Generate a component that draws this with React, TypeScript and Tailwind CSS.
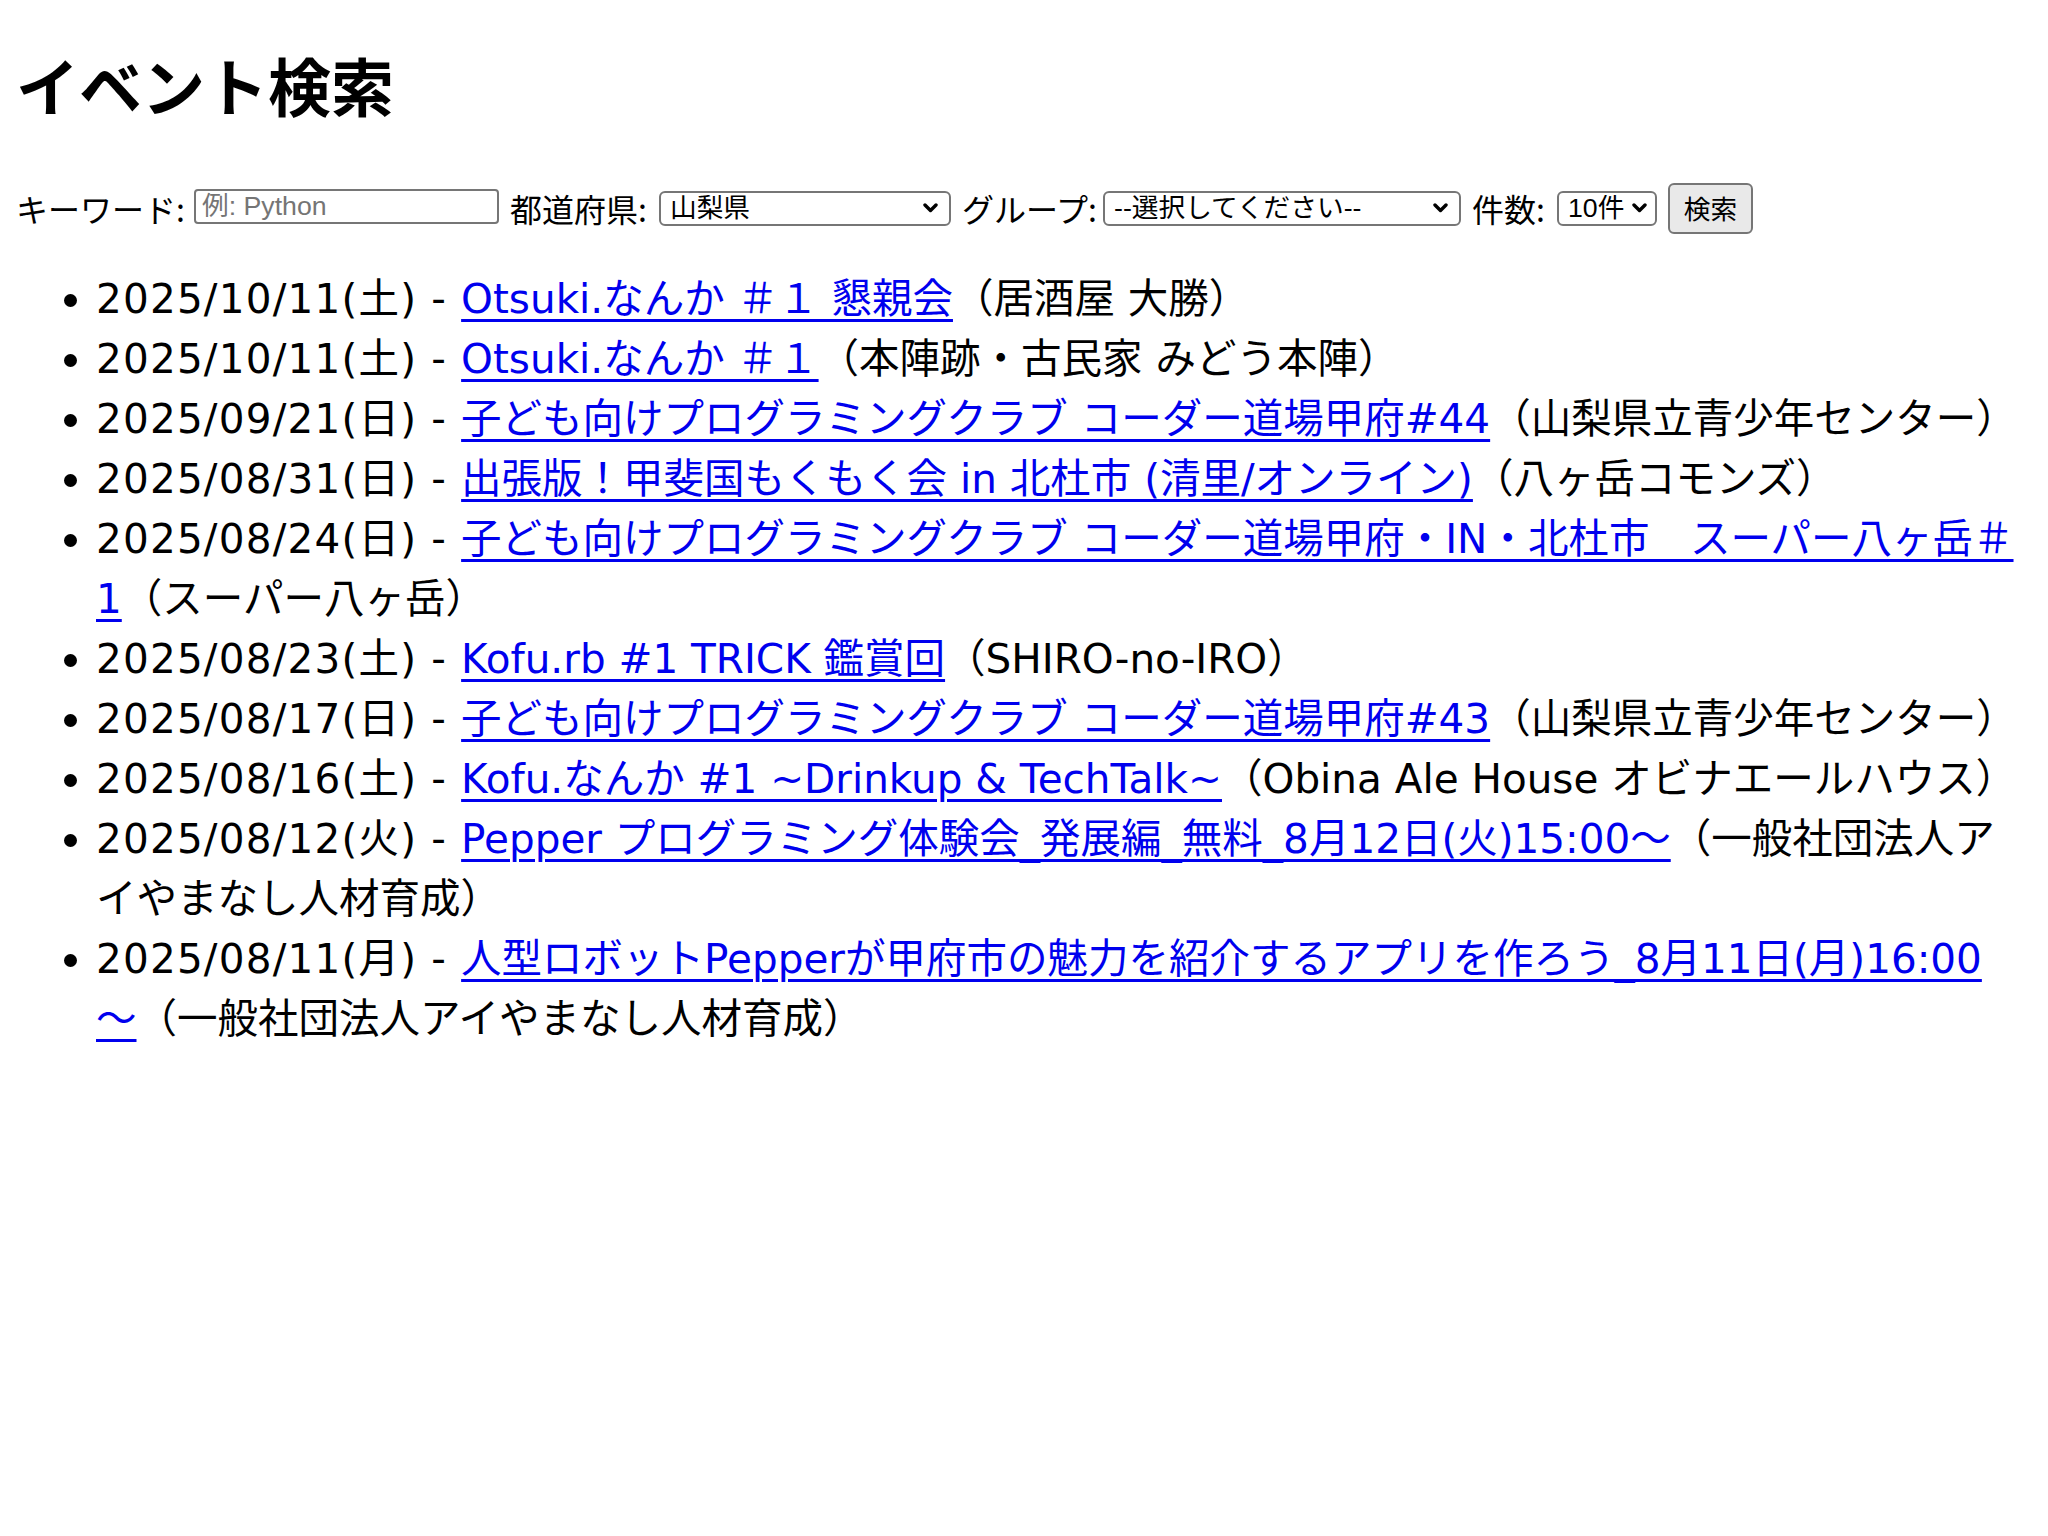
import React from "react";

type Ev = { date: string; title: string; place: string };

const events: Ev[] = [
  { date: "2025/10/11(土)", title: "Otsuki.なんか ＃１ 懇親会", place: "（居酒屋 大勝）" },
  { date: "2025/10/11(土)", title: "Otsuki.なんか ＃１", place: "（本陣跡・古民家 みどう本陣）" },
  { date: "2025/09/21(日)", title: "子ども向けプログラミングクラブ コーダー道場甲府#44", place: "（山梨県立青少年センター）" },
  { date: "2025/08/31(日)", title: "出張版！甲斐国もくもく会 in 北杜市 (清里/オンライン)", place: "（八ヶ岳コモンズ）" },
  { date: "2025/08/24(日)", title: "子ども向けプログラミングクラブ コーダー道場甲府・IN・北杜市　スーパー八ヶ岳＃\n1", place: "（スーパー八ヶ岳）" },
  { date: "2025/08/23(土)", title: "Kofu.rb #1 TRICK 鑑賞回", place: "（SHIRO-no-IRO）" },
  { date: "2025/08/17(日)", title: "子ども向けプログラミングクラブ コーダー道場甲府#43", place: "（山梨県立青少年センター）" },
  { date: "2025/08/16(土)", title: "Kofu.なんか #1 ~Drinkup & TechTalk~", place: "（Obina Ale House オビナエールハウス）" },
  { date: "2025/08/12(火)", title: "Pepper プログラミング体験会_発展編_無料_8月12日(火)15:00～", place: "（一般社団法人ア\nイやまなし人材育成）" },
  { date: "2025/08/11(月)", title: "人型ロボットPepperが甲府市の魅力を紹介するアプリを作ろう_8月11日(月)16:00\n～", place: "（一般社団法人アイやまなし人材育成）" },
];

function Chevron() {
  return (
    <svg width="15" height="10" viewBox="0 0 15 10" className="pointer-events-none">
      <path d="M2 2 L7.5 7.5 L13 2" fill="none" stroke="#000" strokeWidth="3.4" strokeLinecap="round" strokeLinejoin="round" />
    </svg>
  );
}

function Select({ width, value, options, right }: { width: string; value: string; options: string[]; right: string }) {
  return (
    <span className={`relative inline-flex items-center ${width} h-[35px]`}>
      <select
        defaultValue={value}
        className="appearance-none w-full h-full border-2 border-[#767676] rounded-[6px] bg-white pl-[9px] text-[26.7px] leading-none text-black outline-none font-['Liberation_Sans','Noto_Sans_CJK_JP',sans-serif]"
      >
        {options.map((o) => (
          <option key={o}>{o}</option>
        ))}
      </select>
      <span className={`absolute ${right} top-[12px] flex`}>
        <Chevron />
      </span>
    </span>
  );
}

export default function App() {
  return (
    <div className="min-h-screen bg-white px-4 text-black font-['DejaVu_Sans','Noto_Sans_CJK_JP',sans-serif]">
      <h1 className="pt-[36px] pb-[50px] text-[63px] leading-[96px] font-bold font-['Noto_Sans_CJK_JP',sans-serif]">イベント検索</h1>
      <form className="flex items-center h-[52px] text-[32px] leading-[48px] whitespace-nowrap font-['Noto_Sans_CJK_JP',sans-serif]" onSubmit={(e) => e.preventDefault()}>
        <label className="flex items-center">
          <span className="w-[178px]">キーワード:</span>
          <input
            placeholder="例: Python"
            className="w-[305px] h-[35px] -mt-[4px] border-2 border-[#767676] rounded-[4px] px-[6px] text-[26.7px] placeholder:text-[#757575] outline-none font-['Liberation_Sans','Noto_Sans_CJK_JP',sans-serif]"
          />
        </label>
        <label className="flex items-center">
          <span className="w-[160px] pl-[11px]">都道府県:</span>
          <Select width="w-[292px]" value="山梨県" options={["山梨県"]} right="right-[13px]" />
        </label>
        <label className="flex items-center">
          <span className="w-[152px] pl-[11px]">グループ:</span>
          <Select width="w-[358px]" value="--選択してください--" options={["--選択してください--"]} right="right-[13px]" />
        </label>
        <label className="flex items-center">
          <span className="w-[96px] pl-[11px]">件数:</span>
          <Select width="w-[100px]" value="10件" options={["10件"]} right="right-[10px]" />
        </label>
        <button
          type="submit"
          className="ml-[11px] w-[85px] h-[51px] border-2 border-[#767676] rounded-[6px] bg-[#e9e9e9] text-[26.7px] leading-none"
        >
          検索
        </button>
      </form>
      <ul className="mt-[35px] pl-[80px] list-disc text-[40.5px] leading-[60px]">
        {events.map((e, i) => (
          <li key={i} className="whitespace-pre">
            <span className="tracking-[1.2px]">{e.date} - </span>
            <a href="#" className="text-[#0000ee] underline decoration-[3px] underline-offset-[6px]">{e.title}</a>
            {e.place}
          </li>
        ))}
      </ul>
    </div>
  );
}
